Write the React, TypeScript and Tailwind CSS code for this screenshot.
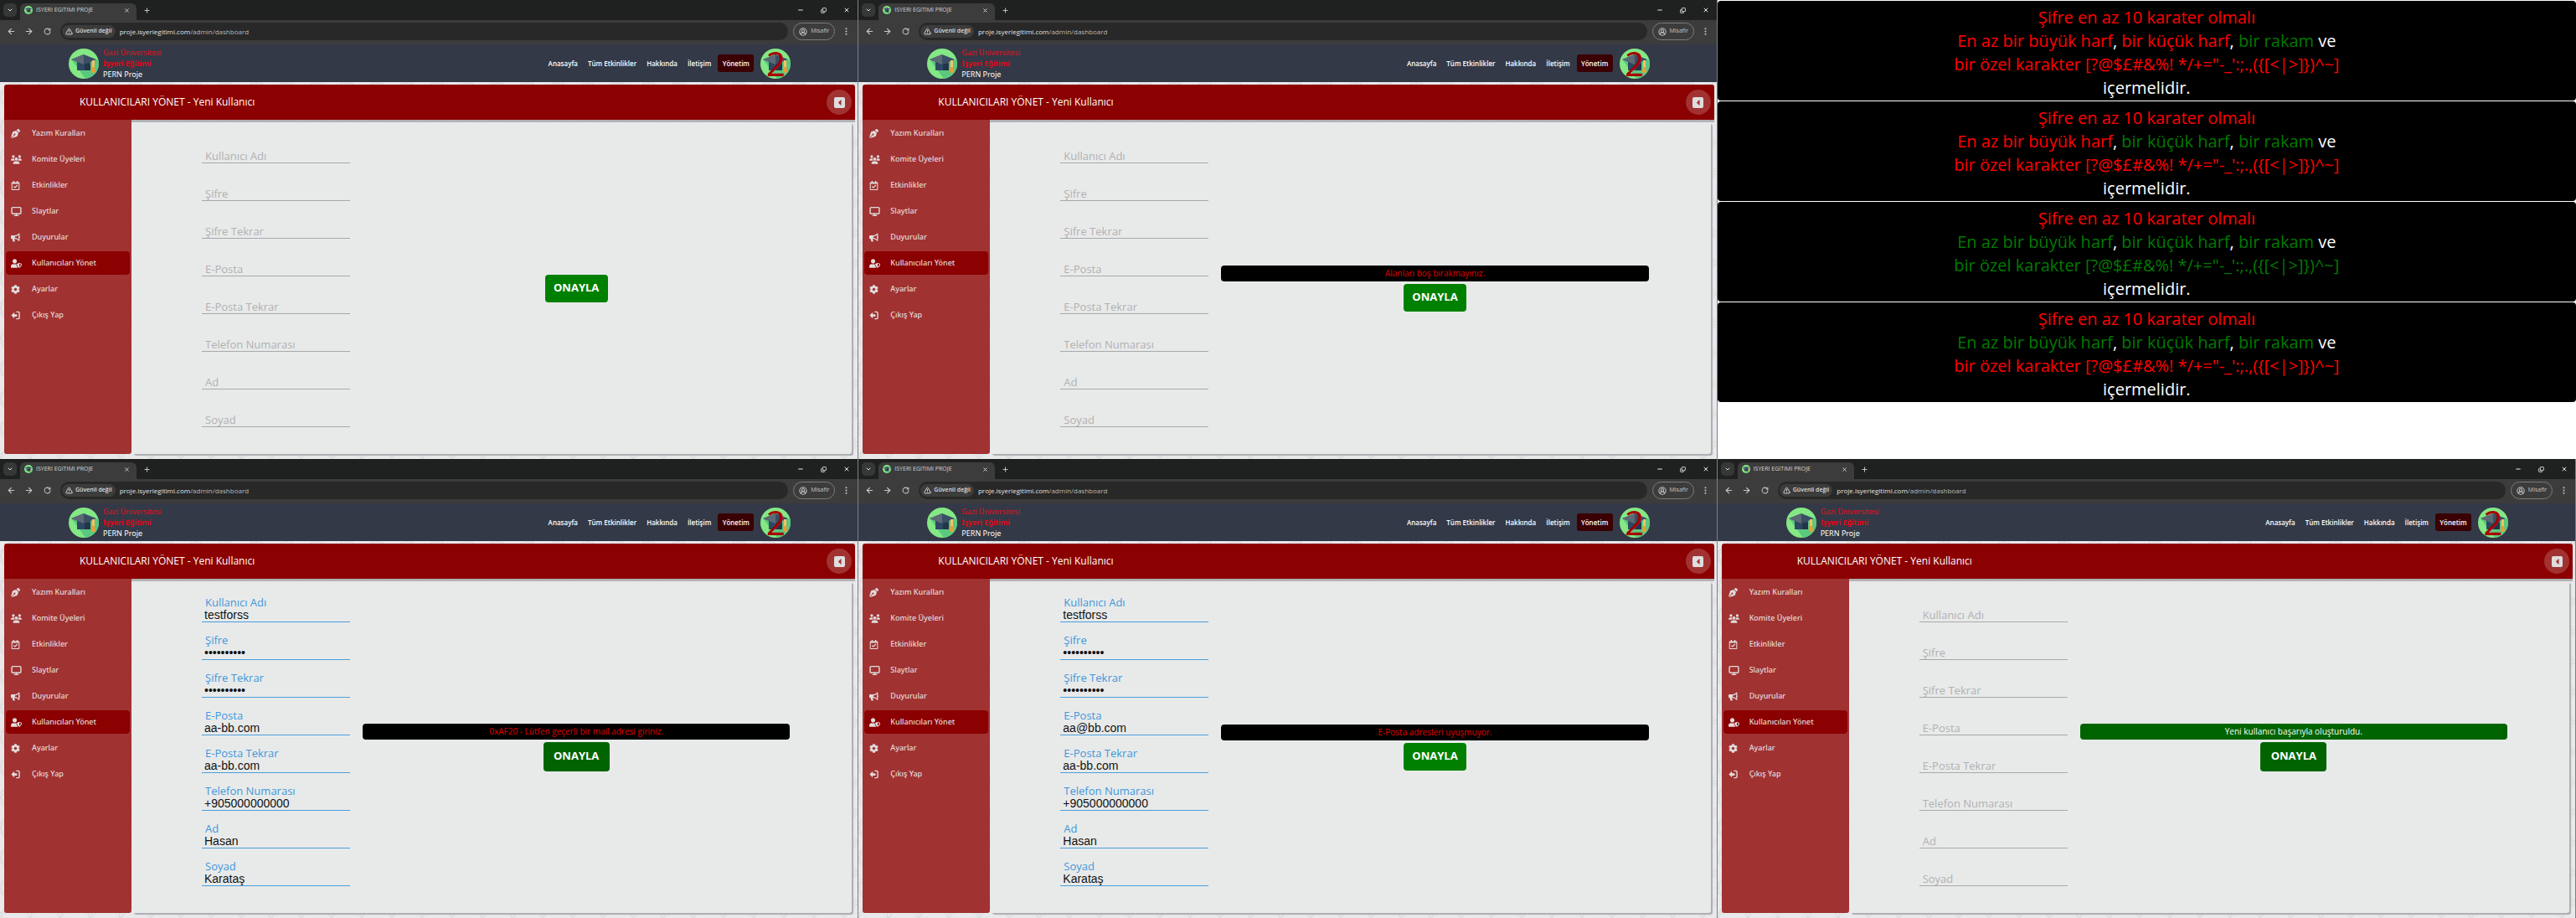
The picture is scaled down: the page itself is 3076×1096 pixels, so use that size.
import { useId } from "react";
import {
  FaPenNib,
  FaRegCalendarCheck,
  FaBullhorn,
  FaUserShield,
  FaCog,
  FaCaretLeft,
} from "react-icons/fa";
import { FaUsers } from "react-icons/fa6";
import {
  ArrowLeft,
  ArrowRight,
  ChevronDown,
  CircleUserRound,
  Copy,
  EllipsisVertical,
  Minus,
  Monitor,
  Plus,
  RotateCw,
  TriangleAlert,
  X,
} from "lucide-react";

type Notice = { text: string; tone: "error" | "success" };

type PanelProps = {
  filled?: string[];
  notice?: Notice;
  hovered?: boolean;
};

const FIELDS = [
  { label: "Kullanıcı Adı", type: "text" },
  { label: "Şifre", type: "password" },
  { label: "Şifre Tekrar", type: "password" },
  { label: "E-Posta", type: "text" },
  { label: "E-Posta Tekrar", type: "text" },
  { label: "Telefon Numarası", type: "text" },
  { label: "Ad", type: "text" },
  { label: "Soyad", type: "text" },
];

function ExitIcon() {
  return (
    <svg viewBox="0 0 24 24" className="size-[11px]" fill="currentColor">
      <path d="M1 12 9 4v5h7v6H9v5z" />
      <path d="M15 3h4a3 3 0 0 1 3 3v12a3 3 0 0 1-3 3h-4" fill="none" stroke="currentColor" strokeWidth="3" strokeLinecap="round" />
    </svg>
  );
}

const MENU = [
  { label: "Yazım Kuralları", icon: <FaPenNib className="size-[11px]" /> },
  { label: "Komite Üyeleri", icon: <FaUsers className="size-[13px]" /> },
  { label: "Etkinlikler", icon: <FaRegCalendarCheck className="size-[11px]" /> },
  { label: "Slaytlar", icon: <Monitor className="size-[13px]" strokeWidth={2.6} /> },
  { label: "Duyurular", icon: <FaBullhorn className="size-[11px]" /> },
  { label: "Kullanıcıları Yönet", icon: <FaUserShield className="size-[13px]" />, active: true },
  { label: "Ayarlar", icon: <FaCog className="size-[11px]" /> },
  { label: "Çıkış Yap", icon: <ExitIcon /> },
];

function CapLogo({ className }: { className: string }) {
  const id = useId();
  return (
    <svg viewBox="0 0 36 36" className={className} aria-hidden="true">
      <clipPath id={id}>
        <circle cx="18" cy="18" r="18" />
      </clipPath>
      <g clipPath={`url(#${id})`}>
        <rect width="36" height="36" fill="#84e884" />
        <path d="M4 14 20 36h16V13z" fill="#5ac87e" />
        <path d="M10 15h16v11H10z" fill="#2f4862" />
        <path d="M19 18h7v8h-7z" fill="#22354a" />
        <path d="M18 7 33 13 18 19 3 13z" fill="#3a4f66" />
        <path d="M18 7v12L3 13z" fill="#5b6a74" />
        <path d="M28 14h3v14l-1 1-2-1z" fill="#f8c063" />
        <path d="M28 22h3l1 6-3 1-2-1z" fill="#f09a35" />
      </g>
    </svg>
  );
}

function Lattice() {
  const id = useId();
  return (
    <svg className="absolute inset-0 size-full" aria-hidden="true">
      <defs>
        <pattern id={id} width="36" height="36" patternUnits="userSpaceOnUse">
          <g fill="none" stroke="#dadadd" strokeWidth="1">
            <circle cx="18" cy="18" r="17" />
            <circle cx="0" cy="0" r="12" />
            <circle cx="36" cy="0" r="12" />
            <circle cx="0" cy="36" r="12" />
            <circle cx="36" cy="36" r="12" />
            <path d="M0 18 18 0l18 18-18 18z" />
          </g>
        </pattern>
      </defs>
      <rect width="100%" height="100%" fill={`url(#${id})`} />
    </svg>
  );
}

function BrowserChrome() {
  return (
    <div className="bg-[#3c3c3c] font-['Open_Sans',sans-serif]">
      <div className="flex h-6 items-end bg-[#1f2121] pl-1">
        <button aria-label="Sekme ara" className="mb-1 flex size-4 items-center justify-center rounded-[5px] bg-[#363737] text-[#e0e0e0]">
          <ChevronDown className="size-2" strokeWidth={3} />
        </button>
        <div className="ml-1 flex h-5 w-[139px] items-center rounded-t-md bg-[#3c3c3c] pr-1 pb-1 pl-[5px]">
          <CapLogo className="size-[10px]" />
          <span className="ml-1 flex-1 text-[7px] text-[#d6d6d6]">ISYERI EGITIMI PROJE</span>
          <button aria-label="Sekmeyi kapat" className="px-1 text-[#e0e0e0]">
            <X className="size-[7px]" strokeWidth={3} />
          </button>
        </div>
        <button aria-label="Yeni sekme" className="mb-[7px] ml-2 text-[#c8c8c8]">
          <Plus className="size-[9px]" strokeWidth={2.5} />
        </button>
        <div className="mr-[9px] mb-2 ml-auto flex gap-5 text-[#e6e6e6]">
          <button aria-label="Simge durumuna küçült">
            <Minus className="size-2" strokeWidth={3} />
          </button>
          <button aria-label="Önceki boyut">
            <Copy className="size-[7px] -scale-x-100 rotate-180" strokeWidth={3} />
          </button>
          <button aria-label="Kapat">
            <X className="size-2" strokeWidth={3} />
          </button>
        </div>
      </div>
      <div className="flex h-[29px] items-center pr-2 pb-[2px] pl-2 text-[#c4c4c4]">
        <button aria-label="Geri">
          <ArrowLeft className="size-[11px]" strokeWidth={2.5} />
        </button>
        <button aria-label="İleri" className="ml-[10px]">
          <ArrowRight className="size-[11px]" strokeWidth={2.5} />
        </button>
        <button aria-label="Yenile" className="ml-3">
          <RotateCw className="size-[9px]" strokeWidth={2.7} />
        </button>
        <div className="ml-[11px] flex h-[21px] flex-1 items-center rounded-full bg-[#282828] pl-[2px]">
          <span className="flex h-[15px] items-center gap-[3px] rounded-full bg-[#3c3c3c] px-1 text-[7px] font-semibold text-[#dcdcdc]">
            <TriangleAlert className="size-[9px]" strokeWidth={2.5} />
            Güvenli değil
          </span>
          <span className="ml-[5px] text-[8px] text-[#b8b8b8]">
            <span className="text-[#e2e2e2]">proje.isyeriegitimi.com</span>/admin/dashboard
          </span>
        </div>
        <button className="ml-[6px] flex h-[21px] w-[50px] items-center justify-center gap-1 rounded-full border border-[#7c7c7c] text-[7px] text-[#c4c4c4]">
          <CircleUserRound className="size-[10px]" strokeWidth={2.5} />
          Misafir
        </button>
        <button aria-label="Menü" className="ml-2">
          <EllipsisVertical className="size-[11px]" strokeWidth={2.5} />
        </button>
      </div>
    </div>
  );
}

function SiteHeader() {
  return (
    <header className="flex h-[45px] items-center bg-[#333947] pr-20 pl-[82px]">
      <CapLogo className="size-9" />
      <p className="ml-[5px] font-['Noto_Sans',sans-serif] text-[9px] leading-[13px] text-white">
        <span className="block text-[#e0101c]">Gazi Üniversitesi</span>
        <span className="block font-semibold text-[#f80010]">İşyeri Eğitimi</span>
        <span className="block">PERN Proje</span>
      </p>
      <nav className="ml-auto flex items-center gap-3 text-[8px] font-semibold text-white">
        <a href="#anasayfa">Anasayfa</a>
        <a href="#etkinlikler">Tüm Etkinlikler</a>
        <a href="#hakkinda">Hakkında</a>
        <a href="#iletisim">İletişim</a>
        <a href="#yonetim" className="-ml-1 flex h-[21px] w-[43px] items-center justify-center rounded-[3px] bg-[#3a0003]">
          Yönetim
        </a>
      </nav>
      <div className="relative ml-2 size-9">
        <CapLogo className="size-9" />
        <span className="absolute inset-0 flex items-center justify-center font-['Noto_Sans',sans-serif] text-[40px] leading-none text-[#a80004]">
          2
        </span>
      </div>
    </header>
  );
}

function Field({ label, type, value }: { label: string; type: string; value?: string }) {
  const id = useId();
  const lifted = value !== undefined;
  return (
    <div className={`relative flex h-[45px] flex-col justify-end border-b ${lifted ? "border-[#4a9fdc]" : "border-[#a8a8a8]"}`}>
      <label
        htmlFor={id}
        className={`absolute left-1 text-[13px] leading-4 ${lifted ? "bottom-[15px] text-[#3f97da]" : "bottom-0 text-[#b0b1b1]"}`}
      >
        {label}
      </label>
      <input
        id={id}
        type={type}
        defaultValue={value ?? ""}
        autoComplete="off"
        className="h-[14px] w-full bg-transparent px-[3px] font-['Liberation_Sans',sans-serif] text-[14px] text-[#111] outline-none"
      />
    </div>
  );
}

function Panel({ filled, notice, hovered }: PanelProps) {
  return (
    <section className="flex h-[548px] flex-col border-r border-[#7d7f82]">
      <BrowserChrome />
      <SiteHeader />
      <div className="relative flex flex-1 flex-col overflow-hidden bg-[#e9e9ec] pt-[3px] pr-[3px] pb-[6px] pl-[5px]">
        <Lattice />
        <div className="relative flex h-[42px] items-center justify-between rounded-t-[3px] bg-[#8b0000] pr-1 pl-[90px] shadow-[0_3px_1px_#b0b1b4]">
          <h1 className="text-[12px] font-medium text-white">KULLANICILARI YÖNET - Yeni Kullanıcı</h1>
          <button aria-label="Menüyü daralt" className="flex size-[30px] items-center justify-center rounded-full bg-[#a23232]">
            <span className="flex size-[13px] items-center justify-center rounded-[2px] bg-[#dedede] text-[#a23232]">
              <FaCaretLeft className="size-[11px]" />
            </span>
          </button>
        </div>
        <div className="relative flex flex-1">
          <nav className="flex w-[152px] flex-col gap-[3px] rounded-b-[3px] bg-[#a13232] px-[2px] pt-[2px]">
            {MENU.map((item) => (
              <a
                key={item.label}
                href="#menu"
                className={`flex h-7 items-center rounded-[4px] pl-[6px] font-['Noto_Sans',sans-serif] text-[9px] font-medium text-[#e2dcdc] ${item.active ? "bg-[#8b0000]" : ""}`}
              >
                <span className="w-[25px]">{item.icon}</span>
                {item.label}
              </a>
            ))}
          </nav>
          <main className="mt-[3px] mr-1 ml-px flex flex-1 items-center rounded-[3px] bg-[#e8eaea] pr-[74px] pl-[83px] shadow-[2px_2px_1px_#acadb1]">
            <form className="flex flex-1 items-center gap-[15px]">
              <div className="-mt-[29px] w-[177px]">
                {FIELDS.map((field, i) => (
                  <Field key={field.label} {...field} value={filled?.[i]} />
                ))}
              </div>
              <div className="flex flex-1 flex-col items-center gap-[3px]">
                {notice && (
                  <p
                    role="status"
                    className={`flex h-[19px] w-full items-center justify-center rounded-[4px] text-[10px] ${notice.tone === "error" ? "bg-black text-[#e00000]" : "bg-[#006400] text-white"}`}
                  >
                    {notice.text}
                  </p>
                )}
                <button
                  type="button"
                  className={`rounded-[4px] text-[13px] font-bold text-white ${hovered ? "h-[35px] w-[79px] bg-[#006400]" : "h-[33px] w-[75px] bg-[#008000]"}`}
                >
                  ONAYLA
                </button>
              </div>
            </form>
          </main>
        </div>
      </div>
    </section>
  );
}

type RuleProps = { upper: boolean; lower: boolean; special: boolean };

function PasswordRules({ upper, lower, special }: RuleProps) {
  const tone = (ok: boolean) => (ok ? "text-[#007a00]" : "text-[#ff0000]");
  return (
    <div className="flex h-[119px] flex-col items-center justify-center rounded-[4px] bg-black pt-1 text-[20px] leading-[28px] text-white">
      <p className="text-[#ff0000]">Şifre en az 10 karater olmalı</p>
      <p>
        <span className={tone(upper)}>En az bir büyük harf</span>, <span className={tone(lower)}>bir küçük harf</span>,{" "}
        <span className={tone(true)}>bir rakam</span> ve
      </p>
      <p className={tone(special)}>{"bir özel karakter [?@$£#&%! */+=\"-_':;.,({[<|>]})^~]"}</p>
      <p>içermelidir.</p>
    </div>
  );
}

const person = (mail: string) => [
  "testforss",
  "aaaaaaaaaa",
  "aaaaaaaaaa",
  mail,
  "aa-bb.com",
  "+905000000000",
  "Hasan",
  "Karataş",
];

export default function App() {
  return (
    <div className="grid grid-cols-3 bg-white font-['Open_Sans',sans-serif]">
      <Panel />
      <Panel notice={{ text: "Alanları boş bırakmayınız.", tone: "error" }} />
      <section className="flex flex-col gap-px pt-px">
        <PasswordRules upper={false} lower={false} special={false} />
        <PasswordRules upper={false} lower special={false} />
        <PasswordRules upper lower special />
        <PasswordRules upper lower special={false} />
      </section>
      <Panel filled={person("aa-bb.com")} hovered notice={{ text: "0xAF20 - Lütfen geçerli bir mail adresi giriniz.", tone: "error" }} />
      <Panel filled={person("aa@bb.com")} notice={{ text: "E-Posta adresleri uyuşmuyor.", tone: "error" }} />
      <Panel hovered notice={{ text: "Yeni kullanıcı başarıyla oluşturuldu.", tone: "success" }} />
    </div>
  );
}
